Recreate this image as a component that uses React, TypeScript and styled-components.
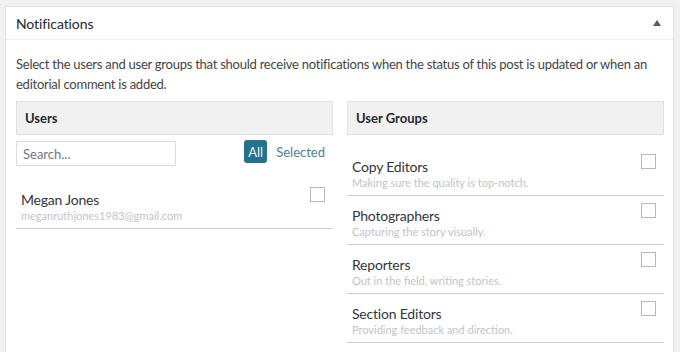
import styled, { createGlobalStyle } from "styled-components";

const font = `"Segoe UI", Lato, "Noto Sans", sans-serif`;

const Global = createGlobalStyle`
  body {
    margin: 0;
    background: #f1f1f1;
    font-family: ${font};
    color: #23282d;
  }
`;

const Page = styled.div`
  padding: 6px 6px 0 5px;
  height: 352px;
  box-sizing: border-box;
  overflow: hidden;
`;

const Panel = styled.div`
  background: #fff;
  border: 1px solid #e3e3e3;
  border-bottom: none;
  height: 400px;
`;

const Header = styled.div`
  height: 32px;
  border-bottom: 1px solid #eeeeee;
  display: flex;
  align-items: center;
  justify-content: space-between;
  padding: 0 12px 0 10px;
`;

const Title = styled.h2`
  margin: 0;
  font-size: 14px;
  font-weight: 400;
  letter-spacing: -0.1px;
  color: #23282d;
`;

const Body = styled.div`
  padding: 0 9px 0 10px;
`;

const Intro = styled.p`
  margin: 14px 0 7px;
  font-size: 13px;
  line-height: 20px;
  letter-spacing: -0.25px;
  color: #444;
`;

const Columns = styled.div`
  display: grid;
  grid-template-columns: 1fr 1fr;
  gap: 14px;
`;

const ColHead = styled.div`
  height: 32px;
  border: 1px solid #e2e2e2;
  background: #f1f1f1;
  display: flex;
  align-items: center;
  padding: 0 8px;
  font-size: 13px;
  font-weight: 700;
  color: #23282d;
`;

const Toolbar = styled.div`
  margin-top: 6px;
  display: flex;
  justify-content: space-between;
  align-items: flex-start;
  padding-right: 8px;
`;

const Search = styled.input`
  width: 160px;
  height: 25px;
  box-sizing: border-box;
  border: 1px solid #dddddd;
  padding: 0 6px;
  font-family: ${font};
  font-size: 13px;
  color: #32373c;
  outline: none;
  &::placeholder {
    color: #72777c;
  }
`;

const Filters = styled.div`
  display: flex;
  align-items: center;
  gap: 9px;
  margin-top: -1px;
`;

const Pill = styled.span<{ $active?: boolean }>`
  height: 23px;
  min-width: ${({ $active }) => ($active ? "23px" : "0")};
  box-sizing: border-box;
  display: inline-flex;
  align-items: center;
  justify-content: center;
  padding: 0 ${({ $active }) => ($active ? "4px" : "0")};
  border-radius: 3px;
  font-size: 13px;
  background: ${({ $active }) => ($active ? "#23708f" : "transparent")};
  color: ${({ $active }) => ($active ? "#e8f4f8" : "#4a8298")};
`;

const List = styled.div<{ $top: number }>`
  margin-top: ${({ $top }) => $top}px;
`;

const Row = styled.div`
  height: 49px;
  box-sizing: border-box;
  border-bottom: 1px solid #cfcfcf;
  display: flex;
  justify-content: space-between;
  align-items: flex-start;
  padding: 7px 8px 0 5px;
`;

const RowText = styled.div`
  margin-top: 5px;
  display: flex;
  flex-direction: column;
`;

const Name = styled.span`
  font-size: 14px;
  line-height: 16px;
  letter-spacing: -0.2px;
  color: #32373c;
`;

const Note = styled.span`
  font-size: 11px;
  line-height: 16px;
  color: #c3c4c7;
`;

const Check = styled.span`
  width: 15px;
  height: 15px;
  box-sizing: border-box;
  border: 1px solid #b4b9be;
  background: #fff;
  flex-shrink: 0;
`;

const groups = [
  { name: "Copy Editors", note: "Making sure the quality is top-notch." },
  { name: "Photographers", note: "Capturing the story visually." },
  { name: "Reporters", note: "Out in the field, writing stories." },
  { name: "Section Editors", note: "Providing feedback and direction." },
];

export default function App() {
  return (
    <>
      <Global />
      <Page>
        <Panel>
          <Header>
            <Title>Notifications</Title>
            <svg width="8" height="6" viewBox="0 0 8 6">
              <path d="M4 0 L8 6 L0 6 Z" fill="#555d66" />
            </svg>
          </Header>
          <Body>
            <Intro>
              Select the users and user groups that should receive notifications when the status of
              this post is updated or when an editorial comment is added.
            </Intro>
            <Columns>
              <div>
                <ColHead>Users</ColHead>
                <Toolbar>
                  <Search placeholder="Search..." />
                  <Filters>
                    <Pill $active>All</Pill>
                    <Pill>Selected</Pill>
                  </Filters>
                </Toolbar>
                <List $top={14}>
                  <Row>
                    <RowText>
                      <Name>Megan Jones</Name>
                      <Note>meganruthjones1983@gmail.com</Note>
                    </RowText>
                    <Check />
                  </Row>
                </List>
              </div>
              <div>
                <ColHead>User Groups</ColHead>
                <List $top={12}>
                  {groups.map((g) => (
                    <Row key={g.name}>
                      <RowText>
                        <Name>{g.name}</Name>
                        <Note>{g.note}</Note>
                      </RowText>
                      <Check />
                    </Row>
                  ))}
                </List>
              </div>
            </Columns>
          </Body>
        </Panel>
      </Page>
    </>
  );
}
